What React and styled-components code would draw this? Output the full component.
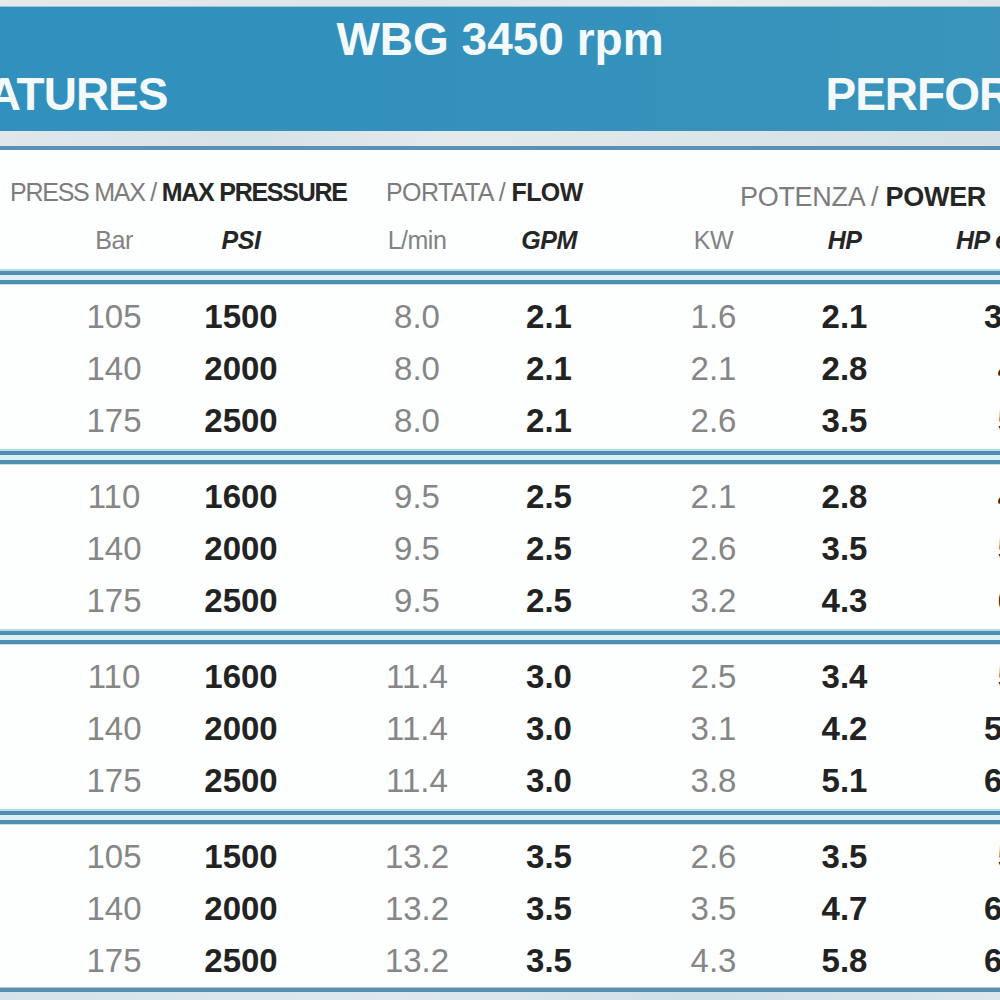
import React from "react";
import styled, { createGlobalStyle } from "styled-components";

const Global = createGlobalStyle`
  html, body { margin: 0; padding: 0; background: #fdfefe; }
  body { width: 1000px; height: 1000px; overflow: hidden; font-family: "Liberation Sans", Arial, sans-serif; }
`;

const Page = styled.div`
  width: 1000px;
  height: 1000px;
  overflow: hidden;
  display: flex;
  flex-direction: column;
  background: #fdfefe;
`;

const TopStrip = styled.div`
  height: 6px;
  flex-shrink: 0;
  background: linear-gradient(90deg, #e4e9eb, #dde5e8 40%, #e6ebed 70%, #dfe6e9);
  border-bottom: 1px solid #9cc6d8;
`;

const Banner = styled.header`
  flex-shrink: 0;
  height: 124px;
  box-sizing: border-box;
  padding: 9px 0 14px;
  background: linear-gradient(90deg, #3190bd, #3391bc 50%, #3a94bb);
  display: flex;
  flex-direction: column;
  gap: 9px;
  overflow: hidden;
  color: #f4f9fb;
`;

const Title = styled.h1`
  margin: 0;
  font-size: 46px;
  line-height: 46px;
  font-weight: 700;
  text-align: center;
  white-space: nowrap;
`;

const SubRow = styled.div`
  display: flex;
  gap: 658px;
  white-space: nowrap;
`;

const SubTitle = styled.div`
  flex-shrink: 0;
  font-size: 46px;
  line-height: 46px;
  font-weight: 700;
  letter-spacing: -1px;
  margin-left: ${(p) => p.$offset || 0}px;
`;

const LightStrip = styled.div`
  flex-shrink: 0;
  height: 15px;
  background: linear-gradient(90deg, #dfe7eb, #d7e2e7 25%, #e4eaec 45%, #dce5e8 70%, #d4e0e6);
  border-bottom: 4px solid #5a90b0;
`;

const HeaderArea = styled.div`
  flex-shrink: 0;
  padding: 28px 0 17px;
  display: flex;
  flex-direction: column;
  gap: 20px;
`;

const GroupHead = styled.div`
  display: grid;
  grid-template-columns: 376px 354px auto;
  padding-left: 10px;
  white-space: nowrap;
  height: 28px;
`;

const HeadLabel = styled.div`
  font-size: ${(p) => p.$size}px;
  line-height: 28px;
  letter-spacing: ${(p) => p.$ls}px;
  padding-top: ${(p) => p.$drop || 0}px;
  color: #7c7c7c;
`;

const Strong = styled.span`
  color: #262626;
  font-weight: 700;
`;

const Cols = styled.div`
  display: grid;
  grid-template-columns: 50px 128px 126px 47px 132px 132px 33px 131px 131px 32px 130px;
  align-items: center;
  white-space: nowrap;
`;

const UnitCell = styled.div`
  grid-column: ${(p) => p.$col};
  text-align: center;
  font-size: 25px;
  line-height: 28px;
  color: ${(p) => (p.$strong ? "#262626" : "#828282")};
  font-weight: ${(p) => (p.$strong ? 700 : 400)};
  font-style: ${(p) => (p.$strong ? "italic" : "normal")};
  letter-spacing: -0.5px;
`;

const Divider = styled.div`
  flex-shrink: 0;
  height: 5px;
  background: #dcf0f4;
  border-top: 4px solid #4f8db1;
  border-bottom: 4px solid #4f8db1;
  box-shadow: 0 -2px 0 #b5dbe6, 0 1px 0 #c2e2ea;
`;

const Group = styled.section`
  flex-shrink: 0;
  padding: 7px 0 4px;
  display: flex;
  flex-direction: column;
`;

const Row = styled(Cols)`
  height: 52px;
`;

const Value = styled.div`
  grid-column: ${(p) => p.$col};
  text-align: center;
  font-size: 33px;
  line-height: 52px;
  font-weight: ${(p) => (p.$strong ? 700 : 400)};
  color: ${(p) => (p.$strong ? "#222222" : "#868686")};
`;

const BottomLine = styled.div`
  flex-shrink: 0;
  margin-top: -4px;
  height: 4px;
  background: #5a90b0;
  border-top: 1px solid #a7d0df;
`;

const BottomStrip = styled.div`
  flex: 1;
  background: linear-gradient(90deg, #d5e4ea, #dfe9ed 40%, #cfe0e7 70%, #dbe7eb);
`;

const columns = [2, 3, 5, 6, 8, 9, 11];
const strongCols = [false, true, false, true, false, true, true];

const groups = [
  [
    ["105", "1500", "8.0", "2.1", "1.6", "2.1", "3.5"],
    ["140", "2000", "8.0", "2.1", "2.1", "2.8", "4"],
    ["175", "2500", "8.0", "2.1", "2.6", "3.5", "5"],
  ],
  [
    ["110", "1600", "9.5", "2.5", "2.1", "2.8", "4"],
    ["140", "2000", "9.5", "2.5", "2.6", "3.5", "5"],
    ["175", "2500", "9.5", "2.5", "3.2", "4.3", "6"],
  ],
  [
    ["110", "1600", "11.4", "3.0", "2.5", "3.4", "5"],
    ["140", "2000", "11.4", "3.0", "3.1", "4.2", "5.5"],
    ["175", "2500", "11.4", "3.0", "3.8", "5.1", "6.5"],
  ],
  [
    ["105", "1500", "13.2", "3.5", "2.6", "3.5", "5"],
    ["140", "2000", "13.2", "3.5", "3.5", "4.7", "6.5"],
    ["175", "2500", "13.2", "3.5", "4.3", "5.8", "6.5"],
  ],
];

const units = ["Bar", "PSI", "L/min", "GPM", "KW", "HP", "HP equiv"];

export default function App() {
  return (
    <Page>
      <Global />
      <TopStrip />
      <Banner>
        <Title>WBG 3450 rpm</Title>
        <SubRow>
          <SubTitle $offset={-69}>FEATURES</SubTitle>
          <SubTitle>PERFORMANCE</SubTitle>
        </SubRow>
      </Banner>
      <LightStrip />
      <HeaderArea>
        <GroupHead>
          <HeadLabel $size={25} $ls={-1.25}>
            PRESS MAX / <Strong>MAX PRESSURE</Strong>
          </HeadLabel>
          <HeadLabel $size={25} $ls={-0.6}>
            PORTATA / <Strong>FLOW</Strong>
          </HeadLabel>
          <HeadLabel $size={27} $ls={-0.3} $drop={5}>
            POTENZA / <Strong>POWER</Strong>
          </HeadLabel>
        </GroupHead>
        <Cols>
          {units.map((u, i) => (
            <UnitCell key={u} $col={columns[i]} $strong={strongCols[i]}>
              {u}
            </UnitCell>
          ))}
        </Cols>
      </HeaderArea>
      {groups.map((rows, gi) => (
        <React.Fragment key={gi}>
          <Divider />
          <Group>
            {rows.map((r, ri) => (
              <Row key={ri}>
                {r.map((v, ci) => (
                  <Value key={ci} $col={columns[ci]} $strong={strongCols[ci]}>
                    {v}
                  </Value>
                ))}
              </Row>
            ))}
          </Group>
        </React.Fragment>
      ))}
      <BottomLine />
      <BottomStrip />
    </Page>
  );
}
